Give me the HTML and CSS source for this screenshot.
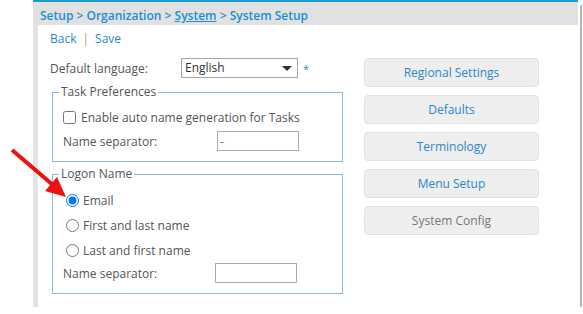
FILE: index.html
```html
<!DOCTYPE html>
<html lang="en">
<head>
  <meta charset="UTF-8">
  <title>System Setup</title>
  <link rel="stylesheet" href="styles.css">
</head>
<body>

<div class="page">
  <div class="panel">
    <!-- breadcrumb -->
    <div class="crumbs">
      <a href="#">Setup</a> &gt; <a href="#">Organization</a> &gt; <a href="#" class="u">System</a> &gt; <span>System Setup</span>
    </div>

    <div class="body">
      <div class="actions">
        <a href="#">Back</a><span class="sep">|</span><a href="#">Save</a>
      </div>

      <div class="cols">
        <div class="left">
          <div class="row lang">
            <label class="lbl">Default language:</label>
            <div class="select">English<span class="caret"></span></div>
            <span class="req">*</span>
          </div>

          <fieldset class="group task">
            <legend>Task Preferences</legend>
            <label class="opt check"><input type="checkbox"> Enable auto name generation for Tasks</label>
            <div class="row sep-row">
              <span class="lbl">Name separator:</span>
              <input type="text" class="txt" value="-">
            </div>
          </fieldset>

          <fieldset class="group logon">
            <legend>Logon Name</legend>
            <label class="opt"><input type="radio" name="logon" checked> Email</label>
            <label class="opt"><input type="radio" name="logon"> First and last name</label>
            <label class="opt"><input type="radio" name="logon"> Last and first name</label>
            <div class="row sep-row">
              <span class="lbl">Name separator:</span>
              <input type="text" class="txt">
            </div>
          </fieldset>
        </div>

        <div class="right">
          <button class="btn">Regional Settings</button>
          <button class="btn">Defaults</button>
          <button class="btn">Terminology</button>
          <button class="btn">Menu Setup</button>
          <button class="btn off">System Config</button>
        </div>
      </div>
    </div>
  </div>

  <!-- flecha roja -->
  <svg class="arrow" width="80" height="210" viewBox="0 0 80 210">
    <line x1="12" y1="150" x2="53" y2="185" stroke="#ee1111" stroke-width="4"/>
    <polygon points="66,197 45,191 57,177" fill="#ee1111"/>
  </svg>
</div>

</body>
</html>
```

FILE: styles.css
```css
* { box-sizing: border-box; }

body {
  margin: 0;
  font-family: "Open Sans", Arial, sans-serif;
  font-size: 12px;
  color: #555;
  background: #fff;
}

a { color: #2a87c8; text-decoration: none; }

.page {
  position: relative;
  padding-left: 33px;
}

.panel {
  position: relative;
  width: 545px;
  background: #fff;
}

/* sombra fina detras del panel */
.panel::after {
  content: "";
  position: absolute;
  top: 5px;
  left: 5px;
  right: -4px;
  bottom: -5px;
  border-right: 2px solid #b4b4b4;
  border-bottom: 2px solid #b4b4b4;
  z-index: -1;
}

.crumbs {
  height: 25px;
  border-top: 2px solid #1a9ad8;
  background: #e1e1e1;
  padding: 5px 0 0 7px;
  font-size: 12px;
  font-weight: 600;
  color: #1a8ed4;
}

.crumbs a { color: #1a8ed4; }
.crumbs .u { text-decoration: underline; }

.body {
  height: 282px;
  border-left: 5px solid #e3e3e3;
  padding: 4px 0 0 12px;
}

.actions {
  height: 18px;
  line-height: 18px;
  font-size: 12px;
  margin-top: 1px;
}

.actions .sep {
  color: #d0905a;
  margin: 0 6px;
}

.cols {
  display: flex;
  gap: 21px;
  margin-top: 10px;
}

.left { width: 293px; }

.row {
  display: flex;
  align-items: center;
}

.lang { height: 20px; }

.lang .lbl { width: 131px; }

.select {
  position: relative;
  width: 117px;
  height: 20px;
  border: 1px solid #a6a6a6;
  padding-left: 3px;
  line-height: 18px;
  font-size: 12px;
  color: #333;
}

.caret {
  position: absolute;
  right: 5px;
  top: 7px;
  border-left: 5px solid transparent;
  border-right: 5px solid transparent;
  border-top: 5px solid #333;
}

.req {
  color: #2a87c8;
  margin-left: 5px;
  font-size: 11px;
}

.group {
  margin: 0 0 0 2px;
  border: 1px solid #8dbad6;
  padding: 0 6px 10px 10px;
}

.group legend {
  padding: 0 2px;
  margin-left: -4px;
  line-height: 16px;
  color: #555;
}

.task { margin-top: 6px; }
.logon { margin-top: 4px; }

.opt {
  display: flex;
  align-items: center;
  height: 22px;
  font-size: 12px;
}

.opt input {
  margin: 0 5px 0 0;
  width: 13px;
  height: 13px;
}

.check { margin-top: 6px; }

.logon .opt { margin-top: 3px; }
.logon .opt:first-of-type { margin-top: 7px; }
.logon .opt input { margin-left: 3px; margin-right: 4px; }

.sep-row { margin-top: 3px; }

.sep-row .lbl { width: 154px; }

.logon .sep-row { margin-top: 2px; }
.logon .sep-row .lbl { width: 152px; }

.txt {
  width: 82px;
  height: 20px;
  border: 1px solid #aaa;
  padding: 0 2px;
  font-family: "Open Sans", Arial, sans-serif;
  font-size: 12px;
  color: #666;
}

.right {
  display: flex;
  flex-direction: column;
  gap: 8px;
  width: 175px;
}

.btn {
  height: 29px;
  background: #eeeeee;
  border: 1px solid #e2e2e2;
  border-radius: 4px;
  font-family: "Open Sans", Arial, sans-serif;
  font-size: 12px;
  color: #2a87c8;
}

.btn.off { color: #777; }

.arrow {
  position: absolute;
  left: 0;
  top: 0;
}
```
